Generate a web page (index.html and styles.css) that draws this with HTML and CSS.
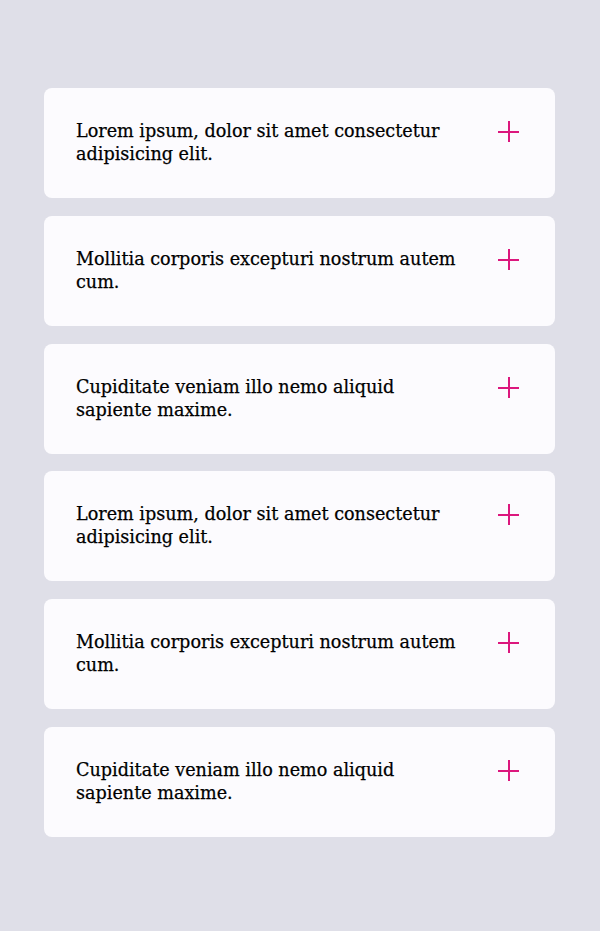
FILE: index.html
```html
<!DOCTYPE html>
<html lang="en">
<head>
<meta charset="utf-8">
<title>FAQ</title>
<link rel="stylesheet" href="styles.css">
</head>
<body>
<main class="faq">
  <div class="item"><p class="q">Lorem ipsum, dolor sit amet consectetur adipisicing elit.</p><span class="plus"></span></div>
  <div class="item"><p class="q">Mollitia corporis excepturi nostrum autem cum.</p><span class="plus"></span></div>
  <div class="item"><p class="q">Cupiditate veniam illo nemo aliquid sapiente maxime.</p><span class="plus"></span></div>
  <div class="item"><p class="q">Lorem ipsum, dolor sit amet consectetur adipisicing elit.</p><span class="plus"></span></div>
  <div class="item"><p class="q">Mollitia corporis excepturi nostrum autem cum.</p><span class="plus"></span></div>
  <div class="item"><p class="q">Cupiditate veniam illo nemo aliquid sapiente maxime.</p><span class="plus"></span></div>
</main>
</body>
</html>
```
FILE: styles.css
```css
html, body {
  margin: 0;
  padding: 0;
  background: #dfdfe8;
}
body {
  font-family: "DejaVu Serif", serif;
}
.faq {
  width: 511px;
  margin: 88px 0 0 44px;
  display: flex;
  flex-direction: column;
  gap: 17.8px;
}
.item {
  background: #fcfbfe;
  border-radius: 8px;
  height: 110px;
  box-sizing: border-box;
  padding: 32px 36px 0 32px;
  display: flex;
  justify-content: space-between;
  align-items: flex-start;
}
.q {
  margin: 0;
  width: 390px;
  font-size: 17.6px;
  line-height: 23px;
  color: #000;
  -webkit-text-stroke: 0.25px #000;
}
.plus {
  position: relative;
  width: 21px;
  height: 21px;
  margin-top: 1px;
  flex: none;
}
.plus::before, .plus::after {
  content: "";
  position: absolute;
  background: #dc177d;
}
.plus::before {
  left: 0; right: 0; top: 10px; height: 2px;
}
.plus::after {
  top: 0; bottom: 0; left: 10px; width: 2px;
}
```
